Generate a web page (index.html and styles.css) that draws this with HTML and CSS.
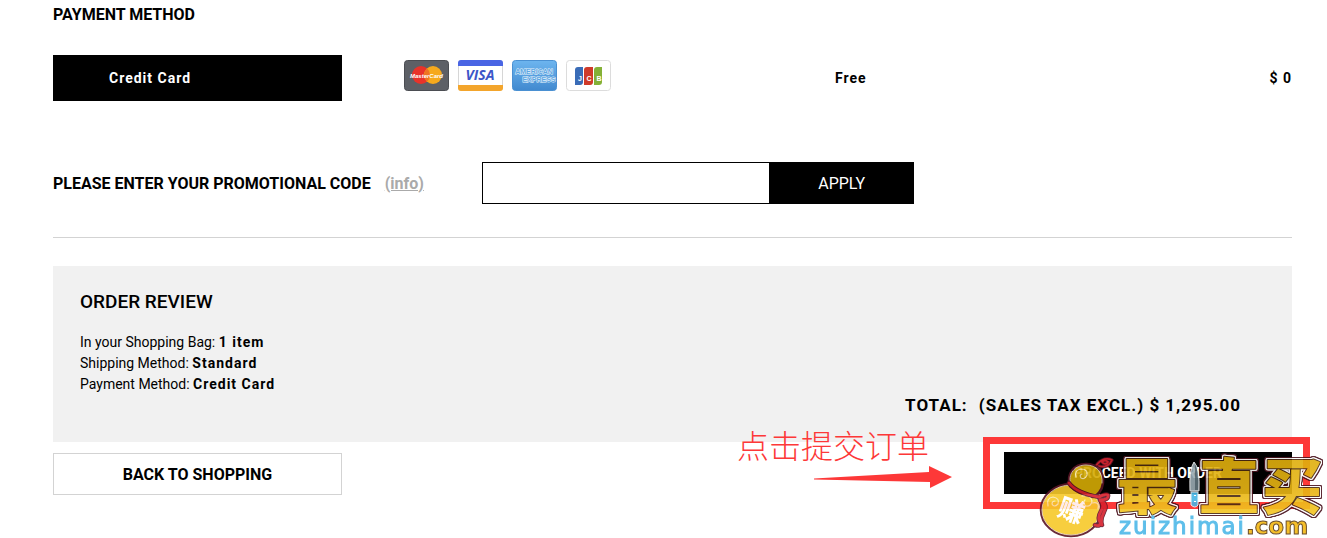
FILE: index.html
```
<!DOCTYPE html>
<html lang="en">

<head>
    <meta charset="UTF-8" />
    <meta name="viewport" content="width=device-width, initial-scale=1.0" />
    <title>Checkout</title>
    <link rel="stylesheet" href="styles.css">
</head>

<body>
    <main class="checkout">
        <h2 class="section-title">Payment method</h2>

        <div class="payment-row">
            <button type="button" class="method">Credit Card</button>
            <div class="cards">
                <!-- MasterCard -->
                <svg class="card" viewBox="0 0 45 32" role="img" aria-label="MasterCard">
                    <rect x="0.5" y="0.5" width="44" height="30" rx="3" fill="#5d6066" stroke="#4b4d52" />
                    <circle cx="17" cy="15" r="9" fill="#e8332a" />
                    <circle cx="29" cy="15" r="9" fill="#f6a91c" />
                    <path d="M23 8.300a9 9 0 0 1 0 13.400a9 9 0 0 1 0-13.400z" fill="#ee7423" />
                    <text x="22.500" y="18" class="mc-text">MasterCard</text>
                </svg>
                <!-- Visa -->
                <svg class="card" viewBox="0 0 45 32" role="img" aria-label="Visa">
                    <rect x="0.5" y="0.5" width="44" height="30" rx="3" fill="#fff" stroke="#d6d6d6" />
                    <path d="M0 6V3a3 3 0 0 1 3-3h39a3 3 0 0 1 3 3v3z" fill="#4a65e4" />
                    <path d="M0 25v3a3 3 0 0 0 3 3h39a3 3 0 0 0 3-3v-3z" fill="#f3a52c" />
                    <text x="22" y="20" class="visa-text">VISA</text>
                </svg>
                <!-- American Express -->
                <svg class="card" viewBox="0 0 45 32" role="img" aria-label="American Express">
                    <defs>
                        <linearGradient id="amex" x1="0" y1="0" x2="0" y2="1">
                            <stop offset="0" stop-color="#6db5ef" />
                            <stop offset="1" stop-color="#4189cf" />
                        </linearGradient>
                    </defs>
                    <rect x="0.5" y="0.5" width="44" height="30" rx="3" fill="url(#amex)" stroke="#4a90d2" />
                    <text x="22" y="14" class="amex-text">AMERICAN</text>
                    <text x="27" y="22" class="amex-text">EXPRESS</text>
                </svg>
                <!-- JCB -->
                <svg class="card" viewBox="0 0 45 32" role="img" aria-label="JCB">
                    <rect x="0.5" y="0.5" width="44" height="30" rx="3" fill="#fff" stroke="#dcdcdc" />
                    <path d="M9 10a3 3 0 0 1 3-3h5v15a3 3 0 0 1-3 3H9z" fill="#3a6cb7" />
                    <path d="M18 10a3 3 0 0 1 3-3h6v15a3 3 0 0 1-3 3h-6z" fill="#cf3a2a" />
                    <path d="M28 10a3 3 0 0 1 3-3h5v15a3 3 0 0 1-3 3h-5z" fill="#84b137" />
                    <text x="14" y="21" class="jcb-text">J</text>
                    <text x="23" y="21" class="jcb-text">C</text>
                    <text x="33" y="21" class="jcb-text">B</text>
                </svg>
            </div>
            <span class="fee">Free</span>
            <span class="amount">$ 0</span>
        </div>

        <form class="promo">
            <label for="promo-code">Please enter your promotional code</label>
            <div class="info"><a href="#">(info)</a></div>
            <div class="promo-field">
                <input type="text" id="promo-code" name="promo-code" />
                <button type="button">APPLY</button>
            </div>
        </form>

        <section class="review">
            <h3>Order review</h3>
            <p>In your Shopping Bag: <b>1 item</b></p>
            <p>Shipping Method: <b>Standard</b></p>
            <p>Payment Method: <b>Credit Card</b></p>
            <p class="total"><span>TOTAL:</span> (SALES TAX EXCL.) $ 1,295.00</p>
        </section>

        <div class="actions">
            <button type="button" class="back">Back to shopping</button>
            <div class="proceed-wrap">
                <button type="button" class="proceed">Proceed with order</button>

                <div class="note">
                    <span lang="zh">点击提交订单</span>
                    <svg class="arrow" viewBox="0 0 138 22" aria-hidden="true">
                        <path d="M0 12.500L115 6V0l23 11-22 11v-6L0 13.500z" fill="#fd3838" />
                    </svg>
                </div>

                <svg class="watermark" viewBox="0 0 290 86" role="img" aria-label="zuizhimai.com">
                    <defs>
                        <linearGradient id="gold" x1="0" y1="0" x2="0" y2="1">
                            <stop offset="0" stop-color="#d9ab08" />
                            <stop offset="0.6" stop-color="#e8b515" />
                            <stop offset="1" stop-color="#fad02c" />
                        </linearGradient>
                    </defs>
                    <!-- gourd -->
                    <g stroke-linecap="round" stroke-linejoin="round" fill="none">
                        <path d="M58 16C61 9 68 5 75 8C73 13 68 16 62 14M65 10q3-3 6 0q-2 3-5 1" stroke="#5a1525" stroke-width="3.500" />
                        <path d="M58 16C61 9 68 5 75 8C73 13 68 16 62 14M65 10q3-3 6 0q-2 3-5 1" stroke="#dc2632" stroke-width="1.800" />
                        <ellipse cx="34" cy="58" rx="30" ry="26" fill="#f7c92a" stroke="#5a1525" stroke-width="2.500" />
                        <ellipse cx="34" cy="58" rx="29" ry="25" stroke="#fff3d0" stroke-width="0.800" />
                        <path d="M33 34C29 22 37 12 49 12C61 12 67 20 66 31C65 39 60 44 56 45C47 43 39 40 33 34z" fill="#d4aa05" stroke="#5a1525" stroke-width="2.500" />
                        <path d="M34 33C30 22 38 13 49 13C60 13 66 21 65 31" stroke="#fff3d0" stroke-width="0.800" />
                        <path d="M39 25q-2-7 5-8q7 0 6 6q-2 5-6 3q-2-3 1-4M11 54q-2-8 5-9q7 1 5 7q-4 4-6 0q0-3 3-3M45 44q8-2 10 5q-1 6-6 5q-4-3-1-6M55 51q8-2 6 6" stroke="#fae8b0" stroke-width="1.200" />
                        <path d="M32 31C38 39 50 43 62 45q7-4 9-2q1 5-8 5q5 5 1 11q-4 7-1 11q1 5-5 3M64 48q7 5 3 12q-4 8-2 13" stroke="#5a1525" stroke-width="4.500" />
                        <path d="M32 31C38 39 50 43 62 45q7-4 9-2q1 5-8 5q5 5 1 11q-4 7-1 11q1 5-5 3M64 48q7 5 3 12q-4 8-2 13" stroke="#d7202c" stroke-width="2.800" />
                    </g>
                    <text x="34" y="68" class="gourd-text" transform="rotate(20 34 60)">赚</text>
                    <!-- brand name -->
                    <g class="brand">
                        <text x="80" y="57">最</text>
                        <text x="162" y="57">直</text>
                        <text x="225" y="57">买</text>
                    </g>
                    <!-- knife -->
                    <path d="M157 10q6 6 5 29h-9q-1-22 4-29z" fill="#9aaab2" stroke="#f4f4f4" />
                    <path d="M158 12q4 8 3 26h-3z" fill="#61747c" />
                    <path d="M154 40h7v13q-3 4-7 0z" fill="#48b5e5" stroke="#f4f4f4" />
                    <path d="M158 43v1M158 49v1" stroke="#fff" stroke-width="2" />
                    <text x="82" y="82" class="domain">zuizhimai<tspan class="domain-com">.com</tspan></text>
                </svg>
            </div>
        </div>
    </main>
</body>

</html>
```
FILE: styles.css
```
* {
    box-sizing: border-box;
}

body {
    margin: 0;
    background: #fff;
    color: #000;
    font-family: "Roboto", "Liberation Sans", sans-serif;
    font-size: 14px;
    line-height: 21px;
}

button,
input {
    font: inherit;
    letter-spacing: inherit;
    border-radius: 0;
}

button {
    cursor: pointer;
}

.checkout {
    padding: 4px 35px 43px 53px;
}

.section-title {
    margin: 0 0 30px;
    font-size: 16px;
    line-height: 21px;
    text-transform: uppercase;
}

.payment-row {
    display: grid;
    grid-template-columns: 351px 431px 1fr auto;
    align-items: center;
    font-weight: bold;
    letter-spacing: 1px;
}

.method {
    width: 289px;
    height: 46px;
    padding: 0 56px;
    border: none;
    background: #000;
    color: #fff;
    text-align: left;
}

.cards {
    display: flex;
    gap: 9px;
    padding-bottom: 4px;
}

.card {
    width: 45px;
    height: 32px;
}

.card text {
    font-family: "Liberation Sans", sans-serif;
    font-weight: bold;
    letter-spacing: 0;
    text-anchor: middle;
    fill: #fff;
}

.card .mc-text {
    font-size: 6px;
    font-style: italic;
}

.card .visa-text {
    font-family: "Open Sans", sans-serif;
    font-size: 14px;
    font-style: italic;
    fill: #3c55c8;
}

.card .amex-text {
    font-size: 7px;
    fill: #5ea6e2;
    stroke: #e6f3fc;
    stroke-width: 1px;
    paint-order: stroke;
}

.card .jcb-text {
    font-size: 7px;
}

.promo {
    display: flex;
    align-items: center;
    margin-top: 61px;
    padding-bottom: 33px;
    border-bottom: 1px solid #d3d3d3;
    font-size: 16px;
    font-weight: bold;
}

.promo label {
    text-transform: uppercase;
}

.info {
    width: 111px;
    padding-left: 14px;
}

.info a {
    color: #aaa;
}

.promo-field {
    display: flex;
    width: 432px;
    height: 42px;
}

.promo-field input {
    flex: 1;
    min-width: 0;
    padding: 0 10px;
    border: 1px solid #000;
}

.promo-field button {
    width: 144px;
    border: none;
    background: #000;
    color: #fff;
    font-weight: normal;
}

.review {
    margin-top: 28px;
    padding: 24px 51px 26px 27px;
    background: #f1f1f1;
}

.review h3 {
    margin: 0 0 18px;
    font-size: 19px;
    font-weight: 500;
    line-height: 24px;
    text-transform: uppercase;
}

.review p {
    margin: 0;
}

.review b {
    letter-spacing: 1px;
}

.review .total {
    font-size: 17px;
    font-weight: bold;
    letter-spacing: 1px;
    text-align: right;
}

.total span {
    margin-right: 6px;
}

.actions {
    display: flex;
    justify-content: space-between;
    margin-top: 10px;
}

.actions button {
    height: 42px;
    font-weight: bold;
    text-transform: uppercase;
}

.back {
    width: 289px;
    margin-top: 1px;
    border: 1px solid #d3d3d3;
    background: #fff;
    color: #000;
    font-size: 16px;
}

.proceed-wrap {
    position: relative;
    width: 288px;
}

.proceed {
    width: 100%;
    border: none;
    background: #000;
    color: #fff;
    font-size: 14px;
}

/* red frame around the button */
.proceed-wrap::after {
    content: "";
    position: absolute;
    inset: -15px -18px -14px -21px;
    border: 7px solid #fd3838;
    pointer-events: none;
}

.note {
    position: absolute;
    top: -30px;
    right: 340px;
    width: 215px;
    color: #fd3838;
    font-family: "Noto Sans CJK SC", sans-serif;
    font-size: 32px;
    font-weight: 300;
    line-height: 44px;
    white-space: nowrap;
}

.note span,
.arrow {
    display: block;
}

.arrow {
    width: 138px;
    height: 22px;
    margin-left: auto;
}

.watermark {
    position: absolute;
    top: 0;
    left: 33px;
    z-index: 1;
    width: 290px;
    height: 86px;
    opacity: 0.9;
    pointer-events: none;
}

.brand,
.gourd-text {
    font-family: "Noto Sans CJK SC", sans-serif;
    font-size: 60px;
    font-weight: 900;
}

/* dark edge, then a white line, then a dark rim */
.brand {
    fill: url(#gold);
    stroke: #4b2a10;
    stroke-width: 2px;
    stroke-linejoin: round;
    paint-order: stroke;
    filter: drop-shadow(1px 0 0 #fff) drop-shadow(-1px 0 0 #fff) drop-shadow(0 1px 0 #fff) drop-shadow(0 -1px 0 #fff) drop-shadow(1px 0 0 #4b1420) drop-shadow(-1px 0 0 #4b1420) drop-shadow(0 1px 0 #4b1420) drop-shadow(0 -1px 0 #4b1420);
}

.gourd-text {
    fill: #fff;
    font-size: 26px;
    text-anchor: middle;
}

.domain {
    fill: #4db8e8;
    font-family: "DejaVu Sans", sans-serif;
    font-size: 23px;
    letter-spacing: 2px;
    stroke: #4db8e8;
    stroke-width: 1px;
}

.domain-com {
    fill: #f5b914;
    font-weight: bold;
    letter-spacing: 0;
    stroke: #5a3a14;
}
```
